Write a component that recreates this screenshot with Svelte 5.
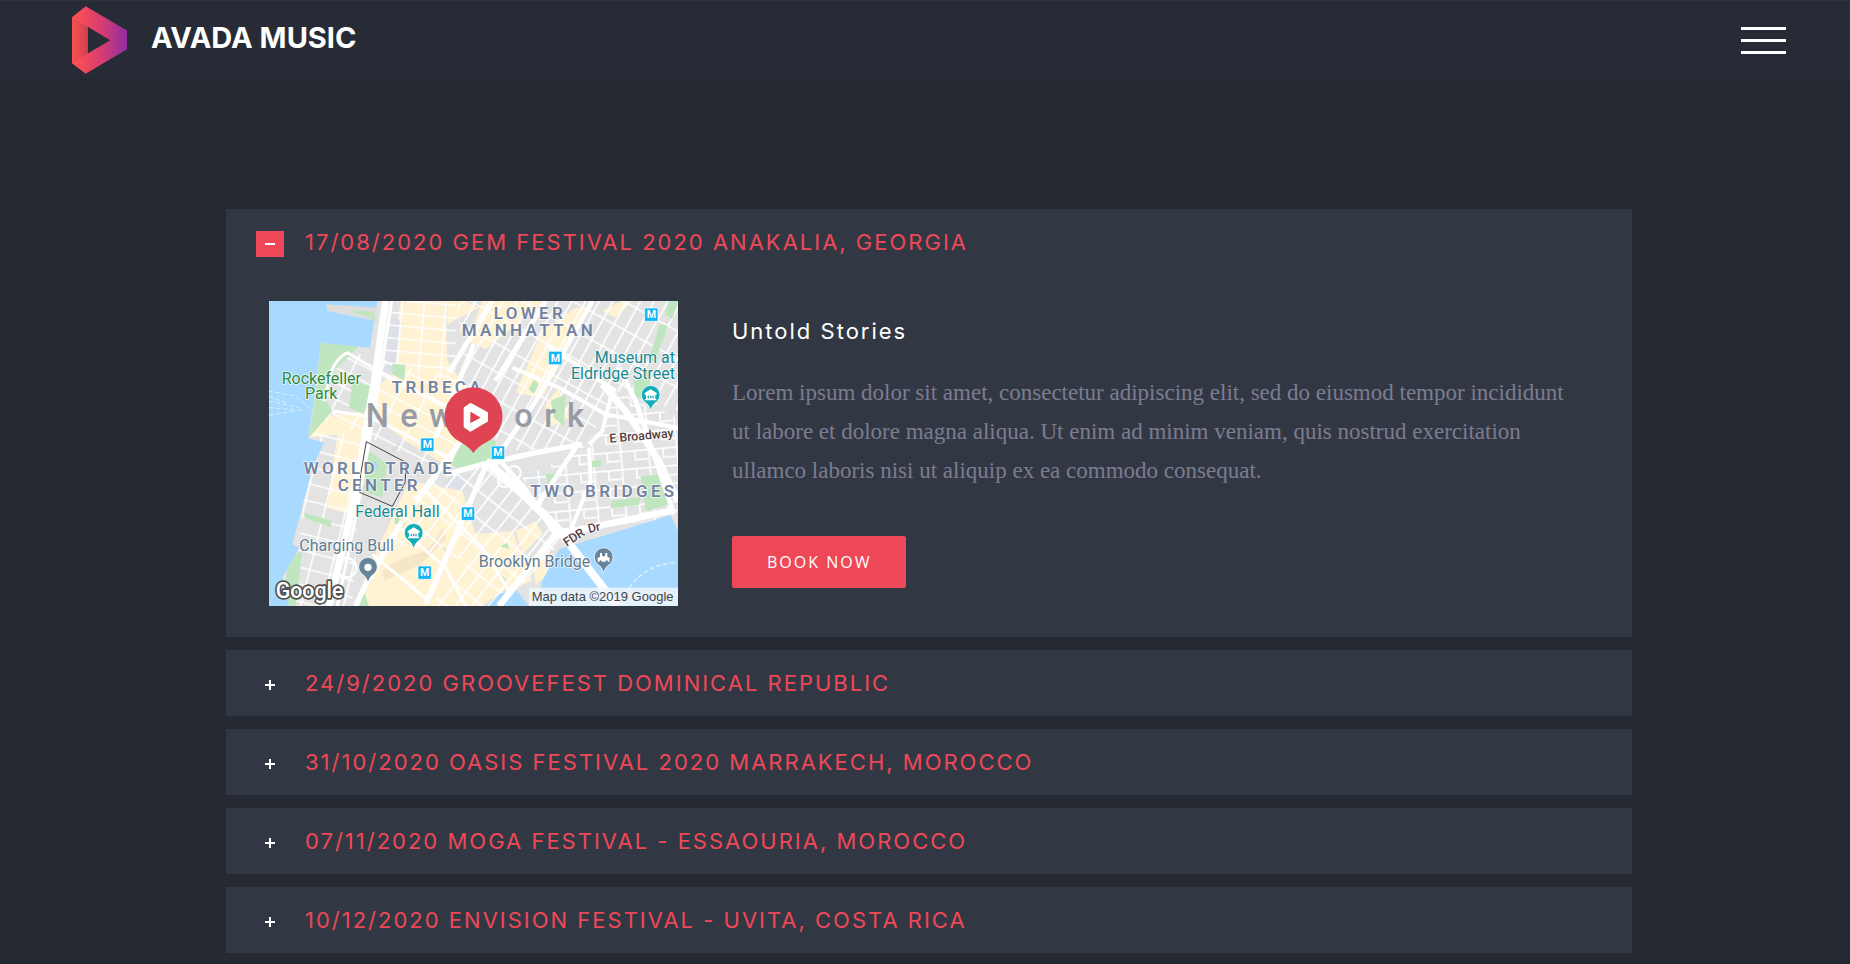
<script lang="ts">
    interface IEvent {
        title: string;
        heading: string;
        text: string;
    }

    const text = 'Lorem ipsum dolor sit amet, consectetur adipiscing elit, sed do eiusmod tempor incididunt ut labore et dolore magna aliqua. Ut enim ad minim veniam, quis nostrud exercitation ullamco laboris nisi ut aliquip ex ea commodo consequat.';

    const events: IEvent[] = [
        { title: '17/08/2020 GEM FESTIVAL 2020 ANAKALIA, GEORGIA', heading: 'Untold Stories', text },
        { title: '24/9/2020 GROOVEFEST DOMINICAL REPUBLIC', heading: 'Untold Stories', text },
        { title: '31/10/2020 OASIS FESTIVAL 2020 MARRAKECH, MOROCCO', heading: 'Untold Stories', text },
        { title: '07/11/2020 MOGA FESTIVAL - ESSAOURIA, MOROCCO', heading: 'Untold Stories', text },
        { title: '10/12/2020 ENVISION FESTIVAL - UVITA, COSTA RICA', heading: 'Untold Stories', text },
    ];

    const metros = [[1147, 41], [859, 171], [475, 431], [687, 455], [597, 638], [467, 815]];
    const museums = [[1145, 284], [434, 698]];

    let open = $state(0);

    function toggle(index: number) {
        open = open === index ? -1 : index;
    }
</script>

<header>
    <a class="brand" href="#home">
        <svg class="logo" viewBox="217 17 165 203" aria-hidden="true">
            <defs>
                <linearGradient id="brand" x1="0" x2="1">
                    <stop offset="0.1" stop-color="#fc4e54" />
                    <stop offset="0.55" stop-color="#d53c72" />
                    <stop offset="0.95" stop-color="#98309c" />
                </linearGradient>
                <linearGradient id="fold" x1="0" x2="1">
                    <stop offset="0" stop-color="#f9504f" />
                    <stop offset="1" stop-color="#cf414e" />
                </linearGradient>
            </defs>
            <path fill="url(#brand)" fill-rule="evenodd" d="M217 50 258 17 382 90V146L258 220 217 188ZM264 79V159L332 119Z" />
            <path fill="url(#fold)" d="M217 50 264 79V159L217 188Z" />
        </svg>
        <span>AVADA MUSIC</span>
    </a>
    <button class="menu" aria-label="Menu">
        <i></i>
        <i></i>
        <i></i>
    </button>
</header>

<main>
    {#each events as event, index}
        <section class="event">
            <h2>
                <button
                    class="toggle"
                    aria-expanded={open === index}
                    onclick={() => toggle(index)}
                >
                    <span class="sign" class:active={open === index}>
                        <svg viewBox="0 0 10 10" aria-hidden="true">
                            <path d={open === index ? 'M0 5H10' : 'M0 5H10M5 0V10'} />
                        </svg>
                    </span>
                    <span>{event.title}</span>
                </button>
            </h2>

            {#if open === index}
                <div class="details">
                    <svg class="map" viewBox="0 0 1227 915" role="img" aria-label="Map of Lower Manhattan">
                        <defs>
                            <pattern id="north" width="66" height="38" patternUnits="userSpaceOnUse" patternTransform="rotate(5)">
                                <path class="street" d="M0 2H66M3 0V38" />
                            </pattern>
                            <pattern id="tribeca" width="78" height="42" patternUnits="userSpaceOnUse" patternTransform="rotate(27)">
                                <path class="street" d="M0 3H78M4 0V42" />
                            </pattern>
                            <pattern id="soho" width="36" height="74" patternUnits="userSpaceOnUse" patternTransform="rotate(29)">
                                <path class="street" d="M0 3H36M3 0V74" />
                            </pattern>
                            <pattern id="east" width="84" height="54" patternUnits="userSpaceOnUse" patternTransform="rotate(-5)">
                                <path class="street" d="M0 3H84M4 0V54M46 3V30H84" />
                            </pattern>
                            <pattern id="downtown" width="66" height="40" patternUnits="userSpaceOnUse" patternTransform="rotate(-52)">
                                <path class="street" d="M0 3H66M4 0V40" />
                            </pattern>
                            <pattern id="battery" width="62" height="50" patternUnits="userSpaceOnUse" patternTransform="rotate(14)">
                                <path class="street" d="M0 3H62M4 0V50" />
                            </pattern>
                        </defs>

                        <rect width="1227" height="915" fill="#e3e3e4" />

                        <g fill="#fff3d3">
                            <path d="M395 0H530L535 180 640 330 545 500 410 420 320 345 300 270 400 200 370 180Z" />
                            <path d="M535 70 630 20 590 0H535ZM640 0H830L650 145 595 120ZM820 90 920 20 960 20 820 290 740 275ZM1040 50 1090 0H1060L1000 30ZM870 260 900 350 840 380 830 310Z" />
                            <path d="M130 350 290 330 240 640 175 620 205 400 120 410Z" />
                            <path d="M420 540 580 570 620 700 730 690 790 840 700 870 640 915H260L300 800Z" />
                            <path d="M740 690 800 660 820 700 760 760ZM790 780 840 750 840 820 800 850Z" />
                        </g>
                        <path fill="#dde0e8" d="M345 40 400 60 375 220 330 210ZM765 520 830 515 830 570 800 575ZM540 530 610 520 590 570 520 550Z" />
                        <path fill="#f4e6c6" d="M340 810Q390 770 440 760T520 680L530 715 455 790 345 840Z" />

                        <path fill="url(#north)" d="M345 0H560L560 240 320 190Z" />
                        <path fill="url(#tribeca)" d="M165 190 235 150 600 240 560 540 280 400 140 350Z" />
                        <path fill="url(#soho)" d="M560 0H1227V330L1040 270 950 440 700 450 600 270Z" />
                        <path fill="url(#east)" d="M960 440 1040 270 1227 350V650L870 690 760 530Z" />
                        <path fill="url(#downtown)" d="M580 500 690 470 900 700 700 915H480L600 780 340 720 400 640 460 540Z" />
                        <path fill="url(#battery)" d="M125 390 280 400 250 915H70Z" />

                        <g fill="#bfe6bf">
                            <path d="M155 125 270 135 195 210 165 290 190 330 120 410 140 270Z" />
                            <path d="M250 240 305 255 285 340 240 320ZM370 188 410 192 405 238 370 220Z" />
                            <path d="M545 490 590 400 680 420 680 490 580 510ZM300 450 355 490 340 590 280 570ZM778 265 795 236 810 250 795 278ZM845 300 890 278 885 375 855 350Z" />
                            <path d="M1200 0H1227L1210 55 1188 40ZM1172 70 1197 75 1155 185 1140 175ZM1095 240 1150 200 1135 300 1095 285Z" />
                            <path d="M1115 525 1185 520 1205 610 1130 630ZM1028 600 1115 588 1110 612 1025 622ZM968 480 996 476 996 498 968 498ZM830 520 868 515 840 572Z" />
                            <path d="M105 635 188 660 185 677 108 652ZM60 770 100 750 80 915H40ZM285 870 300 915H270ZM380 645 410 665 400 680 375 665ZM690 815 715 840 690 830ZM693 735 715 725 720 745ZM520 735 545 755 535 760ZM370 445 395 425 375 450Z" />
                        </g>

                        <g fill="#a8d9ff">
                            <path d="M0 0H325L303 140 155 125 138 270 118 412 165 425 140 480 128 510 70 730 90 740 40 830 60 915H0Z" />
                            <path d="M820 840 870 745 1205 643 1227 690V915H800ZM690 880 740 865 780 915H660Z" />
                            <path d="M307 490 318 480 328 498 315 510Z" />
                        </g>
                        <path fill="#dededf" d="M172 10 325 20 322 60 175 30Z" />
                        <path fill="#bfe6bf" d="M252 27 315 34 318 60 290 42 255 38Z" />

                        <g class="road">
                            <path stroke-width="22" d="M350 0 318 230 255 600 180 915" />
                            <path stroke-width="9" d="M368 0 335 220 270 600 205 915" />
                            <path stroke-width="15" d="M670 0 540 215M615 130 500 410M830 0 680 240" />
                            <path stroke-width="9" d="M165 300 180 235Q195 175 235 155L320 205 580 340M190 330 290 345 400 395 550 480" />
                            <path stroke-width="16" d="M530 520 640 490 800 455 940 430M440 600 590 400M400 660 285 860 260 915M655 485 470 910" />
                            <path stroke-width="24" d="M650 480 720 540 860 675 1045 915" />
                            <path stroke-width="14" d="M690 475 770 565 860 700M690 460 800 300 970 0M930 425 800 620M1050 200 1100 300 1215 640" />
                            <path stroke-width="20" d="M690 915 860 700 960 680 1205 630M1000 250 1070 330 1170 480 1227 600" />
                            <path stroke-width="12" d="M730 200 870 260 1010 340 1227 380M830 130 1040 270M960 430 1000 390 1030 270M960 440 965 540 900 700" />
                            <path stroke-width="9" d="M460 560 640 740 720 870M390 680 530 800 590 915M310 760 480 900" />
                            <circle cx="705" cy="540" r="18" stroke-width="6" />
                            <circle cx="735" cy="515" r="20" stroke-width="6" />
                            <circle cx="233" cy="800" r="29" stroke-width="7" />
                        </g>
                        <path fill="none" stroke="#444" stroke-width="3" d="M292 422 412 485 408 545 370 616 272 574 275 520Z" />
                        <g fill="none" stroke="#d8efff" stroke-width="3" stroke-dasharray="14 7">
                            <path d="M0 270 80 285 125 325M0 300 90 320M0 320 100 328M0 342 80 330M0 285 60 310" />
                            <path stroke-width="5" d="M1080 860Q1130 790 1220 785" />
                        </g>

                        <g class="label district">
                            <text x="674" y="55" letter-spacing="10">LOWER</text>
                            <text x="578" y="106" letter-spacing="10">MANHATTAN</text>
                            <text x="368" y="277" letter-spacing="10">TRIBECA</text>
                            <text x="104" y="520" letter-spacing="10">WORLD TRADE</text>
                            <text x="206" y="571" letter-spacing="10">CENTER</text>
                            <text x="784" y="588" letter-spacing="10">TWO BRIDGES</text>
                        </g>
                        <g class="city">
                            <text x="290" y="378" letter-spacing="34">New</text>
                            <text x="736" y="378" letter-spacing="34">ork</text>
                        </g>
                        <g class="label place">
                            <text x="38" y="248" fill="#2b8a3c">Rockefeller</text>
                            <text x="108" y="294" fill="#2b8a3c">Park</text>
                            <text x="1218" y="186" fill="#178a91" text-anchor="end">Museum at</text>
                            <text x="1218" y="233" fill="#178a91" text-anchor="end">Eldridge Street</text>
                            <text x="259" y="647" fill="#178a91">Federal Hall</text>
                            <text x="91" y="750" fill="#5f7c91">Charging Bull</text>
                            <text x="629" y="799" fill="#5f7c91">Brooklyn Bridge</text>
                        </g>
                        <g class="label street-name">
                            <text transform="translate(1022 425) rotate(-5)">E Broadway</text>
                            <text transform="translate(893 738) rotate(-33)">FDR</text>
                            <text transform="translate(960 696) rotate(-13)">Dr</text>
                        </g>

                        {#each metros as [x, y]}
                            <g transform="translate({x} {y})">
                                <rect x="-20" y="-20" width="40" height="40" rx="3" fill="#12b5f5" stroke="#fff" stroke-width="2" />
                                <text class="metro" y="11">M</text>
                            </g>
                        {/each}
                        {#each museums as [x, y]}
                            <g transform="translate({x} {y})">
                                <path fill="#12adb9" stroke="#fff" stroke-width="2" d="M0 45Q-4 27-20 17A28 28 0 1 1 20 17Q4 27 0 45Z" />
                                <path fill="#fff" fill-rule="evenodd" d="M-18-8 0-19 18-8V-3H14V10H17V14H-17V10H-14V-3H-18ZM-9 0V8H-5V0ZM-2 0V8H2V0ZM5 0V8H9V0Z" />
                            </g>
                        {/each}
                        <g fill="#66859a" stroke="#fff" stroke-width="2">
                            <path d="M297 845Q293 827 277 817A28 28 0 1 1 317 817Q301 827 297 845Z" />
                            <path d="M1004 816Q1000 797 984 788A28 28 0 1 1 1024 788Q1008 797 1004 816Z" />
                        </g>
                        <circle cx="297" cy="799" r="11" fill="#fff" />
                        <path fill="#fff" d="M986 782V771L993 767V756H999V763L1004 767 1009 763V756H1015V767L1022 771V782H1017Q1014 774 1009 782H999Q994 774 991 782Z" />

                        <path fill="#de4451" d="M613 456Q602 439 575 424A87 87 0 1 1 652 424Q629 435 613 456Z" />
                        <path fill="#fff" fill-rule="evenodd" stroke="#fff" stroke-width="6" stroke-linejoin="round" d="M587 321 604 309 654 336V360L604 389 587 377ZM601 327V372L641 350Z" />

                        <text class="google" x="20" y="891">Google</text>
                        <rect x="780" y="860" width="447" height="55" fill="#f4f8fb" fill-opacity="0.8" />
                        <text class="credit" x="788" y="899">Map data ©2019 Google</text>
                    </svg>
                    <div class="info">
                        <h3>{event.heading}</h3>
                        <p>{event.text}</p>
                        <a class="book" href="#book">BOOK NOW</a>
                    </div>
                </div>
            {/if}
        </section>
    {/each}
</main>

<style>
    :global(body) {
        background: #252932;
        color: #fff;
        font-family: Inter, sans-serif;
    }

    header {
        display: flex;
        align-items: center;
        justify-content: space-between;
        box-sizing: border-box;
        height: 79px;
        padding: 0 64px 0 72px;
        border-top: 1px solid #2e323c;
        background: #272b35;
        box-shadow: 0 1px 3px #23272f;
    }

    .brand {
        display: flex;
        align-items: center;
        gap: 24px;
        color: #fff;
        font-size: 29px;
        font-weight: 700;
        line-height: 36px;
        text-decoration: none;

        & span {
            padding-bottom: 4px;
        }
    }

    .logo {
        width: 55px;
        height: 68px;
    }

    .menu {
        display: flex;
        flex-direction: column;
        gap: 9px;
        width: 45px;
        padding: 0;
        border: 0;
        background: none;
        cursor: pointer;

        & i {
            width: 100%;
            height: 3px;
            background: #fff;
        }
    }

    main {
        display: flex;
        flex-direction: column;
        gap: 13px;
        padding: 130px 218px 11px 226px;
    }

    .event {
        background: #323843;
    }

    h2 {
        margin: 0;
    }

    .toggle {
        display: flex;
        align-items: center;
        gap: 21px;
        width: 100%;
        height: 66px;
        padding: 0 30px;
        border: 0;
        background: none;
        color: #ee4858;
        font-family: inherit;
        font-size: 22px;
        font-weight: 400;
        letter-spacing: 2px;
        text-align: left;
        cursor: pointer;
    }

    .sign {
        display: flex;
        align-items: center;
        justify-content: center;
        width: 28px;
        height: 26px;
        margin-top: 4px;

        &.active {
            background: #ee4858;
        }

        & svg {
            width: 10px;
            height: 10px;
        }

        & path {
            stroke: #fff;
            stroke-width: 2;
        }
    }

    .details {
        display: flex;
        align-items: flex-start;
        gap: 54px;
        padding: 26px 60px 31px 43px;
    }

    .map {
        flex: none;
        width: 409px;
        height: 305px;
        font-family: Roboto, sans-serif;
    }

    .street {
        fill: none;
        stroke: #fff;
        stroke-width: 5;
    }

    .road {
        fill: none;
        stroke: #fff;
    }

    .label {
        stroke: #fff;
        stroke-opacity: 0.8;
        stroke-width: 5;
        stroke-linejoin: round;
        paint-order: stroke;
    }

    .district {
        fill: #73839f;
        font-size: 51px;
        font-weight: 600;
    }

    .city {
        fill: #969ba5;
        font-size: 98px;
        font-weight: 500;
    }

    .place {
        font-size: 48px;
    }

    .street-name {
        fill: #513f40;
        font-size: 37px;
        font-weight: 500;
    }

    .metro {
        fill: #fff;
        font-size: 32px;
        font-weight: 700;
        text-anchor: middle;
    }

    .google {
        fill: #fff;
        stroke: #505050;
        stroke-width: 10;
        stroke-linejoin: round;
        paint-order: stroke;
        font-size: 64px;
        font-weight: 500;
    }

    .credit {
        fill: #444;
        font-family: "Liberation Sans", Arial, sans-serif;
        font-size: 39px;
    }

    .info {
        flex: 1;
        padding-top: 14px;
    }

    h3 {
        margin: 0;
        font-size: 22px;
        font-weight: 400;
        line-height: 32px;
        letter-spacing: 2px;
    }

    p {
        margin: 26px 0 46px;
        color: #7c7c91;
        font-family: "Liberation Serif", "Times New Roman", serif;
        font-size: 23px;
        line-height: 39px;
    }

    .book {
        display: inline-block;
        padding: 0 35px;
        border-radius: 2px;
        background: #ee4858;
        color: #fff;
        font-family: "Open Sans", sans-serif;
        font-size: 16px;
        font-weight: 500;
        line-height: 52px;
        letter-spacing: 2px;
        text-decoration: none;
    }
</style>
